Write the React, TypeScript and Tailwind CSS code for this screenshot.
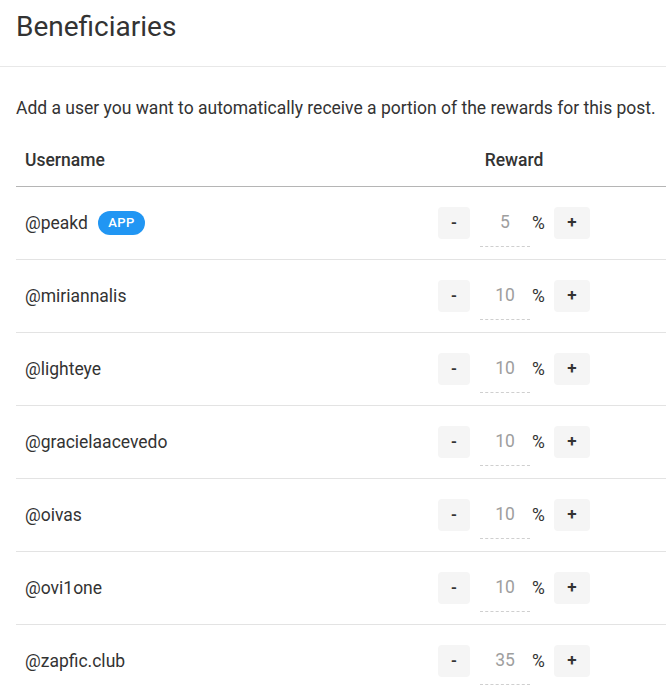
import React from 'react';

export default function App() {
  const beneficiaries = [
    { name: "@peakd", weight: 5, app: true },
    { name: "@miriannalis", weight: 10 },
    { name: "@lighteye", weight: 10 },
    { name: "@gracielaacevedo", weight: 10 },
    { name: "@oivas", weight: 10 },
    { name: "@ovi1one", weight: 10 },
    { name: "@zapfic.club", weight: 35 },
  ];

  return (
    <main className="w-[666px] h-[697px] overflow-hidden bg-white text-[#333]" style={{ fontFamily: 'Roboto, "Noto Sans", Arial, sans-serif' }}>
      {/* Header */}
      <div className="h-[67px] border-b border-[#e8e8e8] px-4 pt-[10px]">
        <h1 className="text-[28px] leading-[34px] font-normal text-[#333]">Beneficiaries</h1>
      </div>

      <p className="mt-[29px] px-4 text-[17.5px] leading-6 text-[#333] whitespace-nowrap">
        Add a user you want to automatically receive a portion of the rewards for this post.
      </p>

      {/* Table */}
      <div className="ml-4 mt-[14px] w-[650px]">
        <div className="grid grid-cols-[1fr_304px] h-[53px] items-center border-b border-[#b5b5b5]">
          <div className="pl-[9px] text-[17.5px] font-medium text-[#333]">Username</div>
          <div className="text-center text-[17.5px] font-medium text-[#333]">Reward</div>
        </div>

        {beneficiaries.map((b) => (
          <div key={b.name} className="grid grid-cols-[1fr_304px] h-[73px] items-center border-b border-[#e3e3e3]">
            <div className="pl-[9px] flex items-center gap-[10px] text-[17.5px] text-[#333]">
              <span>{b.name}</span>
              {b.app && (
                <span className="inline-flex items-center justify-center h-6 w-[47px] rounded-full bg-[#2196f3] text-white text-[13px] font-medium tracking-wide">
                  APP
                </span>
              )}
            </div>
            <div className="flex items-center justify-center">
              <button className="w-8 h-8 rounded bg-[#f5f5f5] text-[16px] font-semibold text-[#333] flex items-center justify-center">-</button>
              <div className="ml-[10px] w-[50px] h-12 border-b border-dashed border-[#cfcfcf] flex items-center justify-center text-[17.5px] text-[#9e9e9e]">
                {b.weight}
              </div>
              <span className="ml-[2px] w-[12px] text-[17.5px] text-[#333]">%</span>
              <button className="ml-[10px] w-9 h-8 rounded bg-[#f5f5f5] text-[17px] font-semibold text-[#333] flex items-center justify-center">+</button>
            </div>
          </div>
        ))}
      </div>
    </main>
  );
}
